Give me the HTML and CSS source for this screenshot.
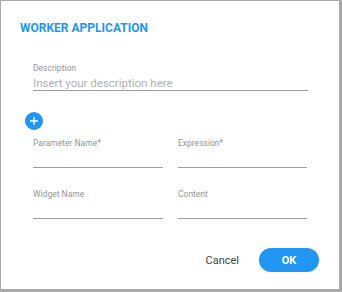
FILE: index.html
```html
<!DOCTYPE html>
<html lang="en">
<head>
  <meta charset="UTF-8">
  <meta name="viewport" content="width=device-width, initial-scale=1.0">
  <title>Worker Application</title>
  <link rel="stylesheet" href="styles.css">
</head>
<body>
  <div class="dialog">
    <h1 class="title">WORKER APPLICATION</h1>

    <div class="content">
      <div class="field">
        <label for="description">Description</label>
        <input type="text" id="description" class="input-lg" placeholder="Insert your description here">
      </div>

      <button type="button" class="add-btn" aria-label="Add parameter">
        <svg width="10" height="10" viewBox="0 0 10 10">
          <path d="M5 1v8M1 5h8" stroke="white" stroke-width="1.3" fill="none"/>
        </svg>
      </button>

      <div class="row">
        <div class="field">
          <label for="paramName">Parameter Name*</label>
          <input type="text" id="paramName">
        </div>
        <div class="field">
          <label for="expression">Expression*</label>
          <input type="text" id="expression">
        </div>
      </div>

      <div class="row">
        <div class="field">
          <label for="widgetName">Widget Name</label>
          <input type="text" id="widgetName">
        </div>
        <div class="field">
          <label for="content">Content</label>
          <input type="text" id="content">
        </div>
      </div>
    </div>

    <div class="actions">
      <button type="button" class="btn-cancel">Cancel</button>
      <button type="button" class="btn-ok">OK</button>
    </div>
  </div>
</body>
</html>
```

FILE: styles.css
```css
body {
  font-family: Roboto, 'Liberation Sans', Arial, sans-serif;
  background-color: #a9a9a9;
  margin: 0;
  padding: 1px 3px 3px 1px;
  height: 292px;
  box-sizing: border-box;
}
.dialog {
  background-color: white;
  width: 338px;
  height: 288px;
  box-sizing: border-box;
  padding: 20px 0 0 0;
}
.title {
  font-size: 12px;
  font-weight: 700;
  line-height: 15px;
  color: #2196f3;
  margin: 0 0 0 19px;
}
.content {
  padding: 27px 31px 0 32px;
}
.field {
  display: flex;
  flex-direction: column;
}
label {
  font-size: 8.5px;
  line-height: 11px;
  color: #959595;
}
input {
  font-family: inherit;
  border: none;
  border-bottom: 1px solid #9e9e9e;
  padding: 0;
  height: 19px;
  font-size: 11.5px;
  color: #333;
  outline: none;
  box-sizing: border-box;
  background: transparent;
}
input.input-lg {
  height: 16px;
  margin-top: 1px;
}
input::placeholder {
  color: #b0b0b0;
}
.add-btn {
  display: flex;
  align-items: center;
  justify-content: center;
  width: 18px;
  height: 18px;
  margin: 21px 0 0 -8px;
  padding: 0;
  border: none;
  border-radius: 50%;
  background-color: #2196f3;
  cursor: pointer;
}
.row {
  display: grid;
  grid-template-columns: 130px 129px;
  column-gap: 15px;
  margin-top: 8px;
}
.row + .row {
  margin-top: 21px;
}
.actions {
  display: flex;
  justify-content: flex-end;
  align-items: center;
  gap: 20px;
  padding: 29px 20px 0 0;
}
.btn-cancel {
  font-family: inherit;
  font-size: 11px;
  color: #424242;
  background: none;
  border: none;
  padding: 0;
  cursor: pointer;
}
.btn-ok {
  font-family: inherit;
  font-size: 11px;
  font-weight: 700;
  color: white;
  background-color: #2196f3;
  border: none;
  border-radius: 12px;
  width: 60px;
  height: 24px;
  cursor: pointer;
}
```
